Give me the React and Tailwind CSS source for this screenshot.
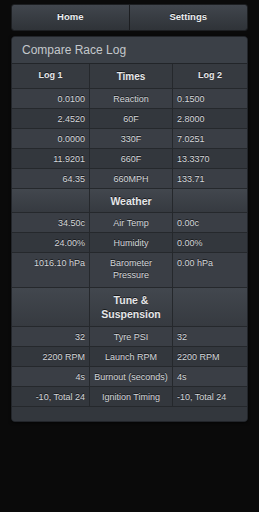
const timeRows = [
    ['0.0100', 'Reaction', '0.1500'],
    ['2.4520', '60F', '2.8000'],
    ['0.0000', '330F', '7.0251'],
    ['11.9201', '660F', '13.3370'],
    ['64.35', '660MPH', '133.71'],
];

const weatherRows = [
    ['34.50c', 'Air Temp', '0.00c'],
    ['24.00%', 'Humidity', '0.00%'],
];

const tuneRows = [
    ['32', 'Tyre PSI', '32'],
    ['2200 RPM', 'Launch RPM', '2200 RPM'],
    ['4s', 'Burnout (seconds)', '4s'],
    ['-10, Total 24', 'Ignition Timing', '-10, Total 24'],
];

const cols = 'grid grid-cols-[78px_83px_1fr] border-b border-[#25282c]';
const shadow = '[text-shadow:0_-1px_0_rgba(0,0,0,0.6)]';

function DataRow({ row, light, tall }) {
    const bg = light ? 'bg-[#3a3e45]' : 'bg-[#33373d]';
    const align = tall ? 'items-start pt-[4px]' : 'items-center';

    return (
        <div className={`${cols} ${bg} ${tall ? 'h-[35px]' : 'h-[20px]'} text-[9px] leading-[12px] text-[#d4d6d9] ${shadow}`}>
            <div className={`flex ${align} justify-end border-r border-[#25282c] pr-[4px]`}>{row[0]}</div>
            <div className={`flex ${align} justify-center border-r border-[#25282c] px-[2px] text-center`}>{row[1]}</div>
            <div className={`flex ${align} pl-[4px]`}>{row[2]}</div>
        </div>
    );
}

function SectionRow({ title, tall }) {
    return (
        <div className={`${cols} ${tall ? 'h-[39px]' : 'h-[24px]'} bg-linear-to-b from-[#42474e] to-[#363a40] text-[10.5px] leading-[14px] font-bold text-[#e6e7e9] ${shadow}`}>
            <div className="border-r border-[#25282c]" />
            <div className="flex items-center justify-center border-r border-[#25282c] px-[4px] text-center">{title}</div>
            <div />
        </div>
    );
}

export default function App() {
    return (
        <div className="min-h-screen bg-[#0a0a0a] px-[11px] pt-[4px] font-['Liberation_Sans',Arial,sans-serif]">
            <nav className="grid h-[27px] grid-cols-2 overflow-hidden rounded-[3px] border border-[#1c1e21] text-[9.5px] font-bold text-[#eceef0]">
                <button type="button" className={`border-r border-[#1c1e21] bg-linear-to-b from-[#41464d] to-[#2f3338] ${shadow}`}>
                    Home
                </button>
                <button type="button" className={`bg-linear-to-b from-[#41464d] to-[#2f3338] ${shadow}`}>
                    Settings
                </button>
            </nav>

            <div className="mt-[5px] overflow-hidden rounded-[4px] border border-[#22252a] bg-[#34383e] shadow-[0_1px_3px_rgba(0,0,0,0.6)]">
                <div className="flex h-[27px] items-center border-b border-[#222529] bg-[#3b4047] px-[10px] text-[12px] text-[#c4c8cc]">
                    Compare Race Log
                </div>

                <div className={`${cols} h-[25px] bg-[#363a40] font-bold text-[#e6e7e9] ${shadow}`}>
                    <div className="flex items-center justify-center border-r border-[#25282c] text-[9px]">Log 1</div>
                    <div className="flex items-center justify-center border-r border-[#25282c] text-[10px]">Times</div>
                    <div className="flex items-center justify-center text-[9px]">Log 2</div>
                </div>

                {timeRows.map((row, i) => (
                    <DataRow key={row[1]} row={row} light={i % 2 === 0} />
                ))}

                <SectionRow title="Weather" />
                {weatherRows.map((row, i) => (
                    <DataRow key={row[1]} row={row} light={i % 2 === 0} />
                ))}
                <DataRow row={['1016.10 hPa', 'Barometer Pressure', '0.00 hPa']} light tall />

                <SectionRow title="Tune & Suspension" tall />
                {tuneRows.map((row, i) => (
                    <DataRow key={row[1]} row={row} light={i % 2 === 0} />
                ))}

                <div className="h-[14px] bg-[#33373d]" />
            </div>
        </div>
    );
}
